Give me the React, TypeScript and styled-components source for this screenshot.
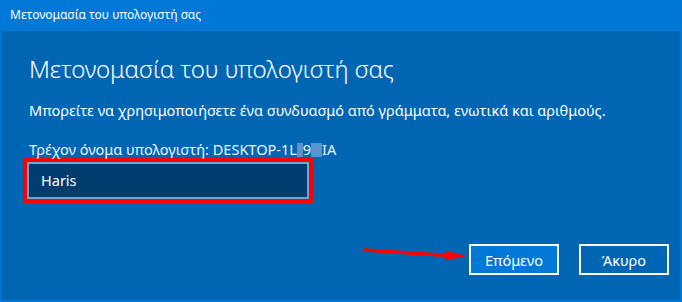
import styled, { createGlobalStyle } from "styled-components";

const GlobalStyle = createGlobalStyle`
  html, body {
    margin: 0;
    padding: 0;
    background: #0066b4;
  }
  * {
    box-sizing: border-box;
  }
`;

export default function App() {
  return (
    <>
      <GlobalStyle />
      <Window>
        <TitleBar>Μετονομασία του υπολογιστή σας</TitleBar>

        <Body>
          {/* περιεχόμενο */}
          <Content>
            <Heading>Μετονομασία του υπολογιστή σας</Heading>
            <Hint>Μπορείτε να χρησιμοποιήσετε ένα συνδυασμό από γράμματα, ενωτικά και αριθμούς.</Hint>
            <CurrentName>
              Τρέχον όνομα υπολογιστή: DESKTOP-1L
              <Blur $w={6} />
              9
              <Blur $w={11} />
              IA
            </CurrentName>
            <Highlight>
              <NameInput defaultValue="Haris" />
            </Highlight>
          </Content>

          {/* κουμπιά */}
          <Footer>
            <Arrow width="106" height="14" viewBox="0 0 106 14">
              <line x1="2" y1="3" x2="92" y2="9" stroke="#ff0000" strokeWidth="3.5" strokeLinecap="round" />
              <polygon points="82,3.5 104,9 82,13.5" fill="#ff0000" />
            </Arrow>
            <Button $primary>Επόμενο</Button>
            <Button>Άκυρο</Button>
          </Footer>
        </Body>
      </Window>
    </>
  );
}

const Window = styled.div`
  width: 682px;
  height: 302px;
  display: flex;
  flex-direction: column;
  font-family: "Noto Sans", "Open Sans", sans-serif;
  color: #fff;
`;

const TitleBar = styled.div`
  height: 31px;
  line-height: 30px;
  padding-left: 10px;
  background: #0078d7;
  font-size: 12px;
  flex-shrink: 0;
`;

const Body = styled.div`
  flex: 1;
  display: flex;
  flex-direction: column;
  justify-content: space-between;
  background: #0066b4;
  border: 2px solid #0078d7;
  border-top: none;
  border-left-width: 1px;
  position: relative;
`;

const Content = styled.div`
  padding: 21px 0 0 22px;
`;

const Heading = styled.h1`
  margin: 0 0 0 6px;
  font-size: 24px;
  font-weight: 300;
  line-height: 34px;
  letter-spacing: -0.1px;
`;

const Hint = styled.p`
  margin: 14px 0 0 6px;
  font-size: 14.5px;
  line-height: 20px;
`;

const CurrentName = styled.div`
  margin: 20px 0 0 6px;
  font-size: 14.5px;
  line-height: 18px;
  color: #eef5fc;
`;

const Blur = styled.span<{ $w: number }>`
  display: inline-block;
  width: ${(p) => p.$w}px;
  height: 14px;
  vertical-align: -2px;
  background:
    linear-gradient(90deg, rgba(255,255,255,0.25) 50%, rgba(180,200,230,0.45) 50%),
    #3d80c4;
  background-size: 4px 4px;
  opacity: 0.8;
`;

const Highlight = styled.div`
  width: 290px;
  margin-top: 0;
  border: 4px solid #ff0000;
`;

const NameInput = styled.input`
  display: block;
  width: 100%;
  height: 37px;
  margin: 0;
  padding: 0 0 1px 12px;
  border: 2px solid #6fa4d9;
  background: #003c6e;
  color: #fff;
  font-family: inherit;
  font-size: 14.5px;
  outline: none;
`;

const Footer = styled.div`
  display: flex;
  justify-content: flex-end;
  align-items: center;
  gap: 20px;
  padding: 0 11px 25px 0;
`;

const Arrow = styled.svg`
  position: absolute;
  left: 362px;
  top: 216px;
`;

const Button = styled.button<{ $primary?: boolean }>`
  width: 90px;
  height: 31px;
  border: 2px solid #fff;
  background: ${(p) => (p.$primary ? "#0078d7" : "transparent")};
  color: #fff;
  font-family: inherit;
  font-size: 14.5px;
  padding: 0;
  cursor: pointer;
`;
